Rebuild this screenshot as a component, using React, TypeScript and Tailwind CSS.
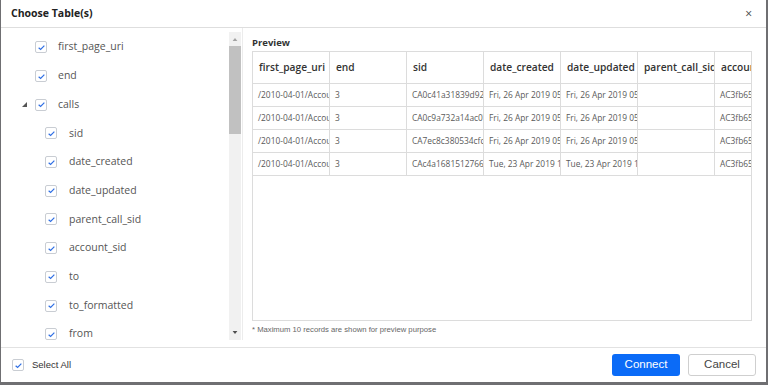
import type React from "react";

const Check = ({ className }: { className?: string }) => (
  <span
    className={`flex h-[12px] w-[12px] shrink-0 items-center justify-center rounded-[2px] border border-[#c9cdd3] bg-white ${className || ""}`}
  >
    <svg viewBox="0 0 12 12" className="h-[9px] w-[9px]">
      <path d="M2.2 6.3 L4.8 8.7 L9.8 3.4" fill="none" stroke="#2f6fe4" strokeWidth="1.6" />
    </svg>
  </span>
);

const tree: { label: string; level: number; expander?: boolean }[] = [
  { label: "first_page_uri", level: 0 },
  { label: "end", level: 0 },
  { label: "calls", level: 0, expander: true },
  { label: "sid", level: 1 },
  { label: "date_created", level: 1 },
  { label: "date_updated", level: 1 },
  { label: "parent_call_sid", level: 1 },
  { label: "account_sid", level: 1 },
  { label: "to", level: 1 },
  { label: "to_formatted", level: 1 },
  { label: "from", level: 1 },
];

const columns = ["first_page_uri", "end", "sid", "date_created", "date_updated", "parent_call_sid", "account_sid"];

const uri = "/2010-04-01/Accounts/AC3fb65a0e2b9d6e1c/Calls.json?PageSize=50";
const acc = "AC3fb65a0e2b9d6e1c4f";
const rows = [
  [uri, "3", "CA0c41a31839d92f1e8a7b", "Fri, 26 Apr 2019 05:12:33 +0000", "Fri, 26 Apr 2019 05:12:49 +0000", "", acc],
  [uri, "3", "CA0c9a732a14ac07d3e1f0", "Fri, 26 Apr 2019 05:10:02 +0000", "Fri, 26 Apr 2019 05:10:21 +0000", "", acc],
  [uri, "3", "CA7ec8c380534cfc9b2d41", "Fri, 26 Apr 2019 05:08:45 +0000", "Fri, 26 Apr 2019 05:09:01 +0000", "", acc],
  [uri, "3", "CAc4a16815127663a0f9e2", "Tue, 23 Apr 2019 11:42:10 +0000", "Tue, 23 Apr 2019 11:42:30 +0000", "", acc],
];

const font = { fontFamily: '"Open Sans", "Noto Sans", sans-serif' } as React.CSSProperties;

export default function App() {
  return (
    <div className="flex h-[385px] w-[768px] bg-[#6f6f72]" style={font}>
      <div className="ml-[1px] flex h-[382px] w-[765px] flex-col bg-white">
        <div className="flex h-[28px] shrink-0 items-center justify-between border-b border-[#dedede] pl-[10px] pr-[14px]">
          <span className="text-[10.5px] font-bold text-[#222]">Choose Table(s)</span>
          <span className="text-[12px] leading-none text-[#444]">×</span>
        </div>

        <div className="flex h-[319px] shrink-0">
          <div className="flex h-[312px] w-[242px] shrink-0 border-r border-[#ececec] pt-[4px]">
            <div className="h-[308px] flex-1 overflow-hidden pt-[1px]">
              {tree.map((t) => (
                <div
                  key={t.label}
                  className={`relative flex h-[28.7px] items-center ${t.level === 0 ? "pl-[34px]" : "pl-[44px]"}`}
                >
                  {t.expander && (
                    <svg viewBox="0 0 6 6" className="absolute left-[21px] h-[5px] w-[5px]">
                      <path d="M6 0 L6 6 L0 6 Z" fill="#555" />
                    </svg>
                  )}
                  <Check />
                  <span className={`${t.level === 0 ? "ml-[11px]" : "ml-[12px]"} text-[10.5px] text-[#555]`}>
                    {t.label}
                  </span>
                </div>
              ))}
            </div>
            <div className="mr-[1px] flex h-[308px] w-[12px] flex-col items-center bg-[#f1f1f1]">
              <svg viewBox="0 0 8 5" className="mt-[6px] h-[3px] w-[6px]">
                <path d="M0 5 L4 0 L8 5 Z" fill="#a3a3a3" />
              </svg>
              <div className="mt-[5px] h-[88px] w-[12px] bg-[#c1c1c1]" />
              <div className="flex-1" />
              <svg viewBox="0 0 8 5" className="mb-[6px] h-[3px] w-[6px]">
                <path d="M0 0 L8 0 L4 5 Z" fill="#505050" />
              </svg>
            </div>
          </div>

          <div className="flex min-w-0 flex-1 flex-col pl-[9px] pr-[14px] pt-[8px]">
            <div className="text-[9.5px] font-bold leading-[14px] text-[#333]">Preview</div>
            <div className="mt-[1px] h-[270px] overflow-hidden border border-[#dcdcdc]">
              <div className="grid w-[539px] grid-cols-[repeat(7,77px)]">
                {columns.map((c) => (
                  <div
                    key={c}
                    className="flex h-[32px] items-center overflow-hidden whitespace-nowrap border-b border-r border-[#dcdcdc] px-[6px] text-[10.2px] font-semibold text-[#333]"
                  >
                    {c}
                  </div>
                ))}
                {rows.map((r, i) =>
                  r.map((v, j) => (
                    <div
                      key={`${i}-${j}`}
                      className="flex h-[23px] items-center overflow-hidden whitespace-nowrap border-b border-r border-[#dcdcdc] px-[5px] text-[8.4px] text-[#5a5a5a]"
                    >
                      {v}
                    </div>
                  ))
                )}
              </div>
            </div>
            <div
              className="mt-[3px] text-[7.7px] text-[#666]"
              style={{ fontFamily: '"Liberation Sans", Arial, sans-serif' }}
            >
              * Maximum 10 records are shown for preview purpose
            </div>
          </div>
        </div>

        <div
          className="flex flex-1 items-center border-t border-[#e2e2e2] pl-[11px] pr-[10px]"
          style={{ fontFamily: '"Liberation Sans", Arial, sans-serif' }}
        >
          <Check />
          <span className="ml-[8px] text-[9.5px] text-[#333]">Select All</span>
          <div className="flex-1" />
          <button className="h-[22px] w-[68px] rounded-[3px] bg-[#0b6bf7] text-[11.5px] text-white">Connect</button>
          <button className="ml-[8px] h-[22px] w-[68px] rounded-[3px] border border-[#cfcfcf] bg-white text-[11.5px] text-[#444]">
            Cancel
          </button>
        </div>
      </div>
    </div>
  );
}
